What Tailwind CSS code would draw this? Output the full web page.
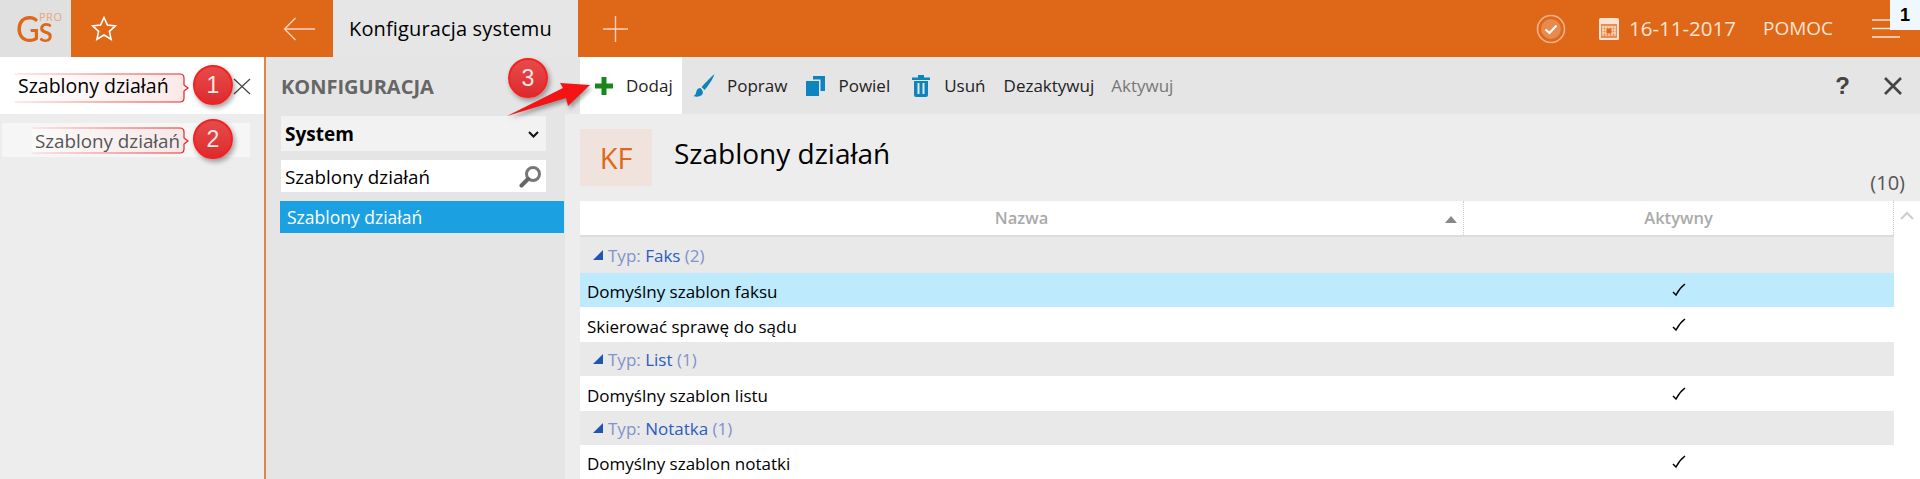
<!DOCTYPE html>
<html lang="pl">
<head>
<meta charset="UTF-8">
<title>Konfiguracja systemu</title>
<script src="https://cdn.jsdelivr.net/npm/@tailwindcss/browser@4"></script>
</head>
<body class="relative w-[1920px] h-[479px] overflow-hidden bg-white font-['Open_Sans',sans-serif] text-black">

<!-- Top bar -->
<header class="flex h-[57px] bg-[#df6718] text-[#fbe3d3]">
  <div class="relative w-[71px] h-full bg-[#e0e0e0] text-[#df6718]">
    <span class="absolute left-[16px] top-[6px] text-[37px] leading-[44px] font-medium scale-x-[.88] origin-left font-['Lato',sans-serif] tracking-[-1px]">Gs</span>
    <span class="absolute left-[39px] top-[11px] text-[11px] leading-[12px] tracking-[.5px] text-[#e6a67c]">PRO</span>
  </div>
  <div class="flex items-center justify-center w-[66px]">
    <svg width="26" height="25" viewBox="0 0 26 25" fill="none" stroke="#fff" stroke-width="1.6"><path d="M13 1.500l3.400 7.500 8 .9-6 5.400 1.700 8L13 19l-7.100 4.300 1.700-8-6-5.400 8-.9z"/></svg>
  </div>
  <div class="flex items-center ml-[146px] w-[50px]">
    <svg width="32" height="24" viewBox="0 0 32 24" fill="none" stroke="#f7d3bb" stroke-width="1.4"><path d="M32 12H1.500M12.500 1L1.500 12l11 11"/></svg>
  </div>
  <div class="flex items-center w-[245px] h-full bg-[#e6e6e6] pl-[16px] text-black text-[20px] tracking-[.15px]">Konfiguracja systemu</div>
  <div class="flex items-center ml-[25px] w-[26px]">
    <svg width="25" height="26" viewBox="0 0 25 26" fill="none" stroke="#f7d3bb" stroke-width="1.4"><path d="M12.500 0v26M0 13h25"/></svg>
  </div>
  <div class="flex-1 flex items-center justify-end relative">
    <svg class="mr-[33px]" width="30" height="30" viewBox="0 0 30 30" fill="none"><circle cx="15" cy="15" r="13.500" stroke="#f0b48d" stroke-width="1.600"/><circle cx="15" cy="15" r="10" fill="#e88a4f"/><path d="M9.500 15.500l4 3.500 7-7.500" stroke="#fff" stroke-width="2"/></svg>
    <svg class="mr-[10px]" width="20" height="22" viewBox="0 0 20 22"><rect x="0" y="0" width="20" height="22" rx="1.500" fill="#fbe3d3"/><rect x="2" y="6" width="16" height="14" fill="#e98d52"/><path d="M4 8v10M7 8v10M10 8v10M13 8v10M16 8v10M3 9h14M3 12h14M3 15h14" stroke="#fbe3d3" stroke-width="1"/><rect x="7.500" y="10.500" width="5" height="5" fill="#df6718"/></svg>
    <span class="text-[20.500px] mr-[27px]">16-11-2017</span>
    <span class="text-[19px] mr-[39px]">POMOC</span>
    <svg class="mr-[20px]" width="28" height="19" viewBox="0 0 28 19" fill="none" stroke="#fbe3d3" stroke-width="1.400"><path d="M0 1h28M0 9.500h28M0 18h28"/></svg>
    <div class="absolute right-0 top-0 w-[30px] h-[30px] flex items-center justify-center bg-[#f0f8ff] text-black font-bold text-[18px] font-['Liberation_Sans',sans-serif]">1</div>
  </div>
</header>

<main class="flex h-[422px]">
  <!-- Left search panel -->
  <aside class="w-[266px] h-full bg-[#ededed] border-r-2 border-[#e0854a]">
    <div class="relative flex items-center h-[57px] bg-white pl-[18px] text-[19.500px]">
      <span class="relative z-10">Szablony działań</span>
      <svg class="absolute left-[233px] top-[21px]" width="18" height="17" viewBox="0 0 18 17" fill="none" stroke="#444" stroke-width="1.200"><path d="M1 1l16 15M17 1L1 16"/></svg>
    </div>
    <div class="flex items-center mt-[9px] ml-[2px] w-[248px] h-[34px] bg-[#f6f6f6] pl-[33px] pt-[2px] text-[18.800px] text-[#555]">
      <span class="relative z-10">Szablony działań</span>
    </div>
  </aside>

  <!-- Configuration tree -->
  <section class="w-[299px] h-full bg-[#e5e5e5] pl-[15px]">
    <div class="flex items-center h-[59px] text-[20px] font-bold text-[#666]">KONFIGURACJA</div>
    <div class="flex items-center justify-between w-[265px] h-[35px] bg-[#f2f2f2] pl-[4px] pr-[3px] pt-[2px] text-[19px] font-bold">
      System
      <svg class="mr-[4px]" width="11" height="7" viewBox="0 0 11 7" fill="none" stroke="#111" stroke-width="2"><path d="M1 1l4.500 4.500L10 1"/></svg>
    </div>
    <div class="flex items-center justify-between w-[265px] h-[32px] mt-[9px] bg-white pl-[4px] pr-[3px] text-[18.800px]">
      <span class="pt-[2px]">Szablony działań</span>
      <svg class="mr-[1px]" width="23" height="23" viewBox="0 0 23 23" fill="none"><circle cx="14" cy="9" r="6.500" stroke="#777" stroke-width="3"/><path d="M9 14l-6.500 6.500" stroke="#666" stroke-width="4" stroke-linecap="round"/></svg>
    </div>
    <div class="flex items-center h-[32px] mt-[9px] -ml-[1px] w-[284px] bg-[#1ba1e2] pl-[7px] text-[17.500px] text-white">Szablony działań</div>
  </section>

  <!-- Content -->
  <section class="flex-1 h-full flex flex-col bg-[#ededed]">
    <div class="flex items-center h-[57px] bg-[#e5e5e5] pl-[15px] text-[17px] text-[#222]">
      <div class="flex items-center w-[102px] h-full bg-white pl-[14px]">
        <svg width="20" height="20" viewBox="0 0 20 20"><path d="M10 1v18M1 10h18" stroke="#17871c" stroke-width="5"/></svg>
        <span class="ml-[12px]">Dodaj</span>
      </div>
      <svg class="ml-[11px]" width="22" height="23" viewBox="0 0 22 23"><path d="M21.500 0C18 3 13 8 8.500 13l3 3C15 12 19.500 6 21.500 0z" fill="#0d84bd"/><path d="M7.500 14c-3.500 0-4 3-4.500 5-.3 1.500-1.500 2.500-2.500 3 3 1.500 7.500.5 9-2 .8-1.500.5-3.500-2-6z" fill="#0d84bd"/></svg>
      <span class="ml-[12px]">Popraw</span>
      <svg class="ml-[19px]" width="19" height="20" viewBox="0 0 19 20"><rect x="0" y="5" width="13" height="15" fill="#0d84bd"/><path d="M7 3.500h7.500V15H19V0H7z" fill="#0d84bd"/></svg>
      <span class="ml-[13px]">Powiel</span>
      <svg class="ml-[22px]" width="18" height="22" viewBox="0 0 18 22"><path d="M0 2.500h18v2.500H0zM6 0h6v2.500H6z" fill="#0d84bd"/><path d="M2 6h14v14a2 2 0 0 1-2 2H4a2 2 0 0 1-2-2z" fill="#0d84bd"/><path d="M6.500 8v11M11.500 8v11" stroke="#e5e5e5" stroke-width="2"/></svg>
      <span class="ml-[14px]">Usuń</span>
      <span class="ml-[18px]">Dezaktywuj</span>
      <span class="ml-[17px] text-[#777]">Aktywuj</span>
      <span class="ml-auto text-[24px] font-bold text-[#444] font-['Liberation_Sans',sans-serif]">?</span>
      <svg class="ml-[34px] mr-[18px]" width="18" height="18" viewBox="0 0 18 18" fill="none" stroke="#444" stroke-width="2.600"><path d="M1 1l16 16M17 1L1 17"/></svg>
    </div>

    <div class="relative flex h-[87px] pl-[15px] pt-[15px]">
      <div class="flex items-center justify-center w-[72px] h-[57px] bg-[#f0e2dc] text-[#df6718] text-[29px] font-medium">KF</div>
      <div class="ml-[22px] mt-[6px] text-[28px] leading-[36px]">Szablony działań</div>
      <div class="absolute right-[15px] bottom-[6px] text-[20px] leading-[24px] text-[#555]">(10)</div>
    </div>

    <div class="flex flex-1 pl-[15px]">
      <div class="w-[1314px] text-[17px] bg-white">
        <div class="flex h-[36px] border-b-2 border-[#dcdcdc] text-[16.500px] font-semibold text-[#aaa]">
          <div class="relative flex items-center justify-center w-[883px]">
            Nazwa
            <svg class="absolute right-[6px] top-[15px]" width="12" height="7" viewBox="0 0 12 7"><path d="M6 0l6 7H0z" fill="#888"/></svg>
          </div>
          <div class="flex items-center justify-center flex-1 border-x border-dotted border-[#ccc]">Aktywny</div>
        </div>
        <div class="flex items-center h-[36px] bg-[#e9e9e9] pl-[13px] text-[#8193c9]">
          <svg width="10" height="10" viewBox="0 0 10 10"><path d="M10 0v10H0z" fill="#1f55b0"/></svg>
          <span class="ml-[5px] pt-[2px]">Typ: <span class="text-[#2c5cc0]">Faks</span> (2)</span>
        </div>
        <div class="flex items-center h-[34px] bg-[#bdeafc]"><div class="w-[883px] pl-[7px] pt-[4px]">Domyślny szablon faksu</div><div class="flex-1 flex justify-center"><svg width="14" height="14" viewBox="0 0 14 14" fill="none" stroke="#000"><path d="M1 9l3 3C6 8 9 4 13 1" stroke-width="1.500"/></svg></div></div>
        <div class="flex items-center h-[35px] bg-white"><div class="w-[883px] pl-[7px] pt-[4px]">Skierować sprawę do sądu</div><div class="flex-1 flex justify-center"><svg width="14" height="14" viewBox="0 0 14 14" fill="none" stroke="#000"><path d="M1 9l3 3C6 8 9 4 13 1" stroke-width="1.500"/></svg></div></div>
        <div class="flex items-center h-[34px] bg-[#e9e9e9] pl-[13px] text-[#8193c9]">
          <svg width="10" height="10" viewBox="0 0 10 10"><path d="M10 0v10H0z" fill="#1f55b0"/></svg>
          <span class="ml-[5px] pt-[2px]">Typ: <span class="text-[#2c5cc0]">List</span> (1)</span>
        </div>
        <div class="flex items-center h-[35px] bg-white"><div class="w-[883px] pl-[7px] pt-[4px]">Domyślny szablon listu</div><div class="flex-1 flex justify-center"><svg width="14" height="14" viewBox="0 0 14 14" fill="none" stroke="#000"><path d="M1 9l3 3C6 8 9 4 13 1" stroke-width="1.500"/></svg></div></div>
        <div class="flex items-center h-[34px] bg-[#e9e9e9] pl-[13px] text-[#8193c9]">
          <svg width="10" height="10" viewBox="0 0 10 10"><path d="M10 0v10H0z" fill="#1f55b0"/></svg>
          <span class="ml-[5px] pt-[2px]">Typ: <span class="text-[#2c5cc0]">Notatka</span> (1)</span>
        </div>
        <div class="flex items-center h-[34px] bg-white"><div class="w-[883px] pl-[7px] pt-[4px]">Domyślny szablon notatki</div><div class="flex-1 flex justify-center"><svg width="14" height="14" viewBox="0 0 14 14" fill="none" stroke="#000"><path d="M1 9l3 3C6 8 9 4 13 1" stroke-width="1.500"/></svg></div></div>
      </div>
      <div class="flex-1 flex justify-center pt-[10px] bg-white">
        <svg width="14" height="9" viewBox="0 0 14 9" fill="none" stroke="#ccc" stroke-width="2"><path d="M1 8l6-6 6 6"/></svg>
      </div>
    </div>
  </section>
</main>

<!-- Annotations -->
<svg class="absolute left-[15px] top-[73px]" width="175" height="31" viewBox="0 0 175 31" fill="none">
  <defs>
    <linearGradient id="fill1"><stop offset="0" stop-color="#fff"/><stop offset="1" stop-color="#f8d6d6"/></linearGradient>
    <linearGradient id="line1"><stop offset="0" stop-color="#ffd5d5"/><stop offset=".6" stop-color="#f06060"/><stop offset="1" stop-color="#e62020"/></linearGradient>
  </defs>
  <path d="M0 1H165Q169 1 169 5V12L173 15 169 18V25Q169 29 165 29H0" fill="url(#fill1)" fill-opacity=".55" stroke="url(#line1)" stroke-width="1.200"/>
</svg>
<svg class="absolute left-[32px] top-[127px]" width="158" height="28" viewBox="0 0 158 28" fill="none">
  <path d="M0 1H148Q152 1 152 5V11L156 14 152 17V22Q152 26 148 26H0" fill="url(#fill1)" fill-opacity=".45" stroke="url(#line1)" stroke-width="1.200"/>
</svg>
<div class="absolute left-[193px] top-[65px] flex items-center justify-center w-10 h-10 rounded-full bg-linear-to-b from-[#e64a4a] to-[#dd2a2e] border-2 border-[#f52020] shadow-[2px_3px_5px_rgba(0,0,0,.35)] text-[#fde8e8] text-[23px] font-['Liberation_Sans',sans-serif]">1</div>
<div class="absolute left-[193px] top-[119px] flex items-center justify-center w-10 h-10 rounded-full bg-linear-to-b from-[#e64a4a] to-[#dd2a2e] border-2 border-[#f52020] shadow-[2px_3px_5px_rgba(0,0,0,.35)] text-[#fde8e8] text-[23px] font-['Liberation_Sans',sans-serif]">2</div>
<div class="absolute left-[508px] top-[58px] flex items-center justify-center w-10 h-10 rounded-full bg-linear-to-b from-[#e64a4a] to-[#dd2a2e] border-2 border-[#f52020] shadow-[2px_3px_5px_rgba(0,0,0,.35)] text-[#fde8e8] text-[23px] font-['Liberation_Sans',sans-serif]">3</div>
<svg class="absolute left-[500px] top-[76px] drop-shadow-[2px_3px_2px_rgba(0,0,0,.35)]" width="96" height="46" viewBox="0 0 96 46">
  <path d="M7 40L63 12 60 7 90 9 68 30 66 22z" fill="#f41414"/>
</svg>
</body>
</html>
